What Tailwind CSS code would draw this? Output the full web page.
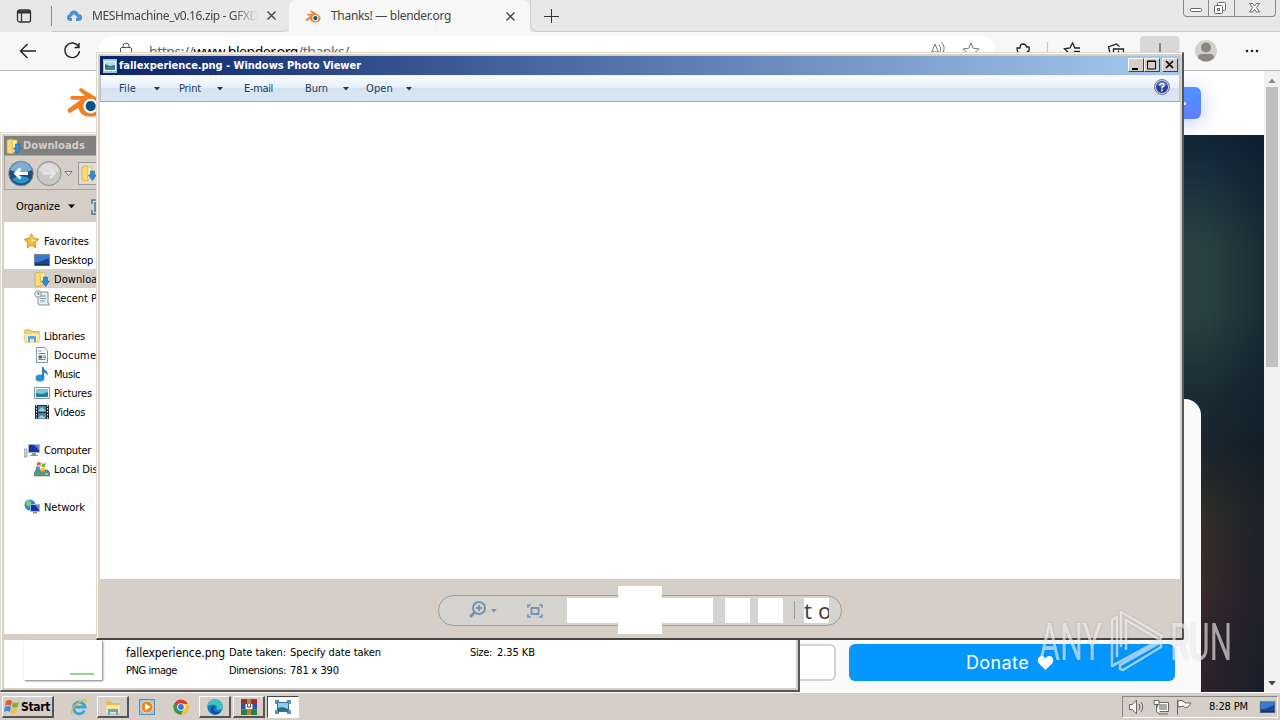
<!DOCTYPE html>
<html lang="en">
<head>
<meta charset="utf-8">
<title>Desktop</title>
<script src="https://cdn.jsdelivr.net/npm/@tailwindcss/browser@4"></script>
</head>
<body class="w-[1280px] h-[720px] overflow-hidden bg-[#d5cfc8]">
<svg class="hidden">
  <symbol id="photo" viewBox="0 0 16 16"><path d="M1 1h14v14H1z" fill="#9fc5e0"/><rect x="2" y="3" width="12" height="10" fill="#fff"/><path d="M3 4h10v8H3z" fill="#2f6f9a"/><path d="M3 4h10v3L8 8 3 6z" fill="#b4dcf0"/><path d="M3 10l5-2 5 2v2H3z" fill="#3d8a86"/></symbol>
  <symbol id="dl" viewBox="0 0 16 16"><path d="M1 2l5-1 1 2v13l-6-1z" fill="#f5dc7a" stroke="#d0a83c" stroke-width=".7"/><path d="M6 2h5v9l-4 4z" fill="#fae9a0" stroke="#d8b44a" stroke-width=".6"/><path d="M9.500 6h4v4h2l-4 5.500L7.500 10h2z" fill="#2e8bd8" stroke="#1c62a6" stroke-width=".6"/></symbol>
  <symbol id="screen" viewBox="0 0 16 14"><rect x=".5" y="1.500" width="15" height="11" fill="#1c4690" stroke="#7088a8"/><path d="M1 2h14v3L5 9 1 9z" fill="#3c78cc"/><path d="M1 11h14v1.500H1z" fill="#16335f"/></symbol>
  <symbol id="caret" viewBox="0 0 6 4"><path d="M0 0h6L3 3.500z" fill="currentColor"/></symbol>
</svg>

<main class="relative w-[1280px] h-[720px] overflow-hidden font-['DejaVu_Sans_Condensed','DejaVu_Sans',sans-serif] text-[11px] text-black whitespace-nowrap">

<!-- Browser window -->
<section class="absolute left-0 top-0 w-[1280px] h-[692px] flex flex-col bg-white">
  <div class="h-8 shrink-0 flex bg-[#e8e8e8] text-[#444] font-['Noto_Sans',sans-serif] text-[12px]">
    <div class="w-[51px] flex items-center pl-4">
      <svg class="w-4 h-4" viewBox="0 0 16 16" fill="none" stroke="#333" stroke-width="1.300"><rect x="1.500" y="2" width="13" height="12" rx="2"/><path d="M1.500 4h13" stroke-width="3"/><path d="M5.500 5v9"/></svg>
    </div>
    <div class="w-px h-5 mt-1.5 bg-[#8a8a8a]"></div>
    <div class="w-[237px] flex items-center pl-[14px] border-b border-[#ccc] rounded-br-lg">
      <svg class="w-4 h-4" viewBox="0 0 16 16"><path d="M4 13a3.600 3.600 0 0 1-.5-7A4.700 4.700 0 0 1 12.600 6 3.500 3.500 0 0 1 12.500 13H10v-3h2L8 6 4 10h2v3z" fill="#4a90d9"/></svg>
      <div class="ml-[10px] w-[166px] overflow-hidden mask-r-from-85%"><span data-w="166">MESHmachine_v0.16.zip - GFXD</span></div>
      <svg class="ml-[9px] w-[9px] h-[9px]" viewBox="0 0 9 9" stroke="#444" stroke-width="1.400"><path d="M.5.5l8 8M8.500.5l-8 8"/></svg>
    </div>
    <div class="w-[241px] flex items-center bg-[#f7f7f7] rounded-t-lg pl-4">
      <svg class="w-4 h-4" viewBox="0 0 34 30"><use href="#blender"/></svg>
      <span class="ml-[10px]" data-w="120">Thanks! — blender.org</span>
      <svg class="ml-[55px] w-[9px] h-[9px]" viewBox="0 0 9 9" stroke="#444" stroke-width="1.400"><path d="M.5.5l8 8M8.500.5l-8 8"/></svg>
    </div>
    <div class="flex-1 flex items-center pl-[13px] border-b border-l border-[#ccc] rounded-bl-lg">
      <svg class="w-[15px] h-[15px]" viewBox="0 0 15 15" stroke="#333"><path d="M7.500 1v14M0 8.500h15"/></svg>
    </div>
    <div class="w-[97px] flex border-b border-[#ccc]">
    <div class="w-[93px] h-[17px] flex border border-t-0 border-[#888] rounded-b-[4px]">
      <svg class="w-full h-full" viewBox="0 0 91 16" fill="#fff" stroke="#666"><path d="M24.500 0v16M50.500 0v16" stroke="#888"/><rect x="6.500" y="8.500" width="11" height="3" rx="1"/><rect x="33.500" y="2.500" width="8" height="8" rx="1"/><rect x="30.500" y="5.500" width="8" height="8" rx="1"/><rect x="33.500" y="8.500" width="2" height="2"/><path d="M65.500 3.500h3l2 2.500 2-2.500h3l-3 4.200 3 4.300h-3l-2-2.500-2 2.500h-3l3-4.300z"/></svg>
    </div></div>
  </div>
  <div class="h-[39px] shrink-0 flex bg-[#f7f7f7] border-b border-[#bbb]">
    <svg class="w-[99px] h-[38px]" viewBox="0 0 99 38" fill="none" stroke="#222" stroke-width="1.400"><path d="M36 19H20.500M27.500 12l-7 7 7 7"/><path d="M78.500 14.500a7.300 7.300 0 1 0 1 4.500M79 11v4.500h-4.500"/></svg>
    <div class="w-[896px] h-[30px] mt-1 rounded-[14px] bg-white flex font-['Noto_Sans',sans-serif] text-[14px] text-[#666]">
      <svg class="ml-5 mt-[6px] w-[14px] h-4" viewBox="0 0 14 16" fill="none" stroke="#555"><rect x="1.500" y="5.500" width="11" height="9" rx="1.500"/><path d="M4 5.500V4a3 3 0 0 1 6 0v1.500"/></svg>
      <span class="ml-4 mt-[5px]" data-w="200">https://<b class="font-normal text-black">www.blender.org</b>/thanks/</span>
      <svg class="ml-auto mr-3 w-[56px] h-[30px]" viewBox="0 0 56 30" fill="none" stroke="#777"><path d="M3 20L8 8l5 12M5 16h6M12 9q3 3 1 7M14 6q5 4 2 11"/><path d="M44 7l2.300 5.300 5.700.6-4.300 3.900 1.300 5.700-5-3-5 3 1.300-5.700L36 12.900l5.700-.6z"/></svg>
    </div>
    <svg class="w-[285px] h-[38px]" viewBox="995 32 285 38" fill="none" stroke="#222" stroke-width="1.300"><path d="M1018 56v-4q-1-1-1-4h3q0-4 3-4t3.500 3H1029v4q-2 0-2 3"/><path d="M1047.500 42v18" stroke="#ccc"/><path d="M1080 48h-5l-2.500-5-2.500 5-5.500.8 4 4-1 5M1074 51.500h6"/><path d="M1110 53l-1.500-6 8-3 3 2.500M1113.500 58v-9h10v9M1118.500 50.500v4"/><rect x="1140" y="36" width="39.500" height="36" rx="4" fill="#d8d8d8" stroke="none"/><path d="M1160 43v11" stroke="#555"/><circle cx="1206" cy="51" r="11" fill="#d4d0cc" stroke="none"/><g fill="#8a8683" stroke="none"><circle cx="1206" cy="47.500" r="5"/><path d="M1198 58q0-4 4-4h8q4 0 4 4-8 7-16 0"/></g><g fill="#222" stroke="none"><circle cx="1247" cy="51" r="1.300"/><circle cx="1252" cy="51" r="1.300"/><circle cx="1257" cy="51" r="1.300"/></g></svg>
  </div>
  <div class="flex-1 flex min-h-0">
    <div class="w-[1264px] flex flex-col">
      <header class="h-16 shrink-0 flex justify-between pl-[65px] pr-[63px] overflow-hidden">
        <svg class="mt-[13px] w-[40px] h-[34px]" viewBox="0 0 34 30"><g id="blender"><path d="M2 22L13 14H5q-2-2 0-3.500h12L12 6q-1-2 1.500-2.500L29 13q5 4 4 8-2 8-11 8-9 0-11-8L4 25.500q-3 0-2-3.500z" fill="#f08024"/><circle cx="22" cy="19.500" r="6.500" fill="#fff"/><circle cx="22" cy="19.500" r="4.500" fill="#0f4f8a"/></g></svg>
        <div class="mt-4 w-20 h-8 rounded-md bg-gradient-to-b from-[#4b93ff] to-[#617fff] shadow-[0_3px_20px_#7d96ff80] flex justify-end items-center pr-[15px]"><i class="w-[3px] h-[3px] rounded-full bg-white"></i></div>
      </header>
      <div class="flex-1 relative overflow-hidden bg-[linear-gradient(180deg,#10243a_0%,#2a4143_20%,#2a4143_32%,#1b2c35_46%,#1a252b_56%,#2f2d28_68%,#38292a_80%,#2c222a_100%)]">
        <div class="absolute right-0 top-0 w-20 h-full bg-[linear-gradient(90deg,#0a1a2a00_25%,#0a1a2a88_100%)]"></div>
        <div class="relative mt-[264px] w-[1201px] h-[293px] rounded-tr-2xl bg-[#fafafa] flex items-end pl-[500px] pb-[11px] pr-[26px] gap-[13px]">
          <div class="w-[336px] h-[37px] border-2 border-[#d2d2d2] rounded-md bg-white"></div>
          <div class="w-[326px] h-[37px] rounded-md bg-[#0397ff] text-white font-['Inter',sans-serif] text-[18px] flex items-center pl-[117px]">
            <span data-w="63">Donate</span>
            <svg class="ml-2 w-[17px] h-[14px]" viewBox="0 0 17 15"><path d="M8.500 15L1.500 8Q-.6 5 .6 2.500 1.800 0 4.500 0q2.500 0 4 2.400Q10 0 12.500 0q2.700 0 3.900 2.500Q17.600 5 15.500 8z" fill="#fff"/></svg>
          </div>
        </div>
      </div>
    </div>
    <div class="w-4 bg-[#f1f1f1] flex flex-col items-center justify-between pt-[7px] pb-[6px]">
      <div class="flex flex-col items-center gap-1"><svg class="w-2 h-[5px] text-[#888] rotate-180"><use href="#caret"/></svg><div class="w-[12px] h-[280px] bg-[#c1c1c1]"></div></div>
      <svg class="w-2 h-[5px] text-[#444]"><use href="#caret"/></svg>
    </div>
  </div>
</section>

<!-- Explorer window -->
<section class="absolute left-0 top-[132px] w-[800px] h-[560px] bg-[#d5cfc8] border-l border-t border-[#dcd8d0] border-r-2 border-b-2 border-r-[#555] border-b-[#555] flex flex-col pl-[3px] pr-[2px] pt-[3px] pb-[2px] shadow-[inset_1px_1px_0_#fff]">
  <div class="h-[19px] shrink-0 bg-[#808080] flex items-center gap-px pl-[2px] text-[#d5cfc8] font-bold"><svg class="w-4 h-4"><use href="#dl"/></svg><span class="mt-px" data-w="62">Downloads</span></div>
  <div class="h-[35px] shrink-0 border border-[#aaa59e] bg-[#d5cfc8] flex items-center">
    <svg class="w-[92px] h-[34px]" viewBox="5 156 92 34"><circle cx="21" cy="173.500" r="12.300" fill="#1d4d7c" stroke="#878d92"/><path d="M10 170a11.500 11.500 0 0 1 22 0q-11 5-22 0" fill="#7daed2"/><path d="M12 179q9-6 18 0-9 9-18 0" fill="#2594cf"/><path d="M28 173.500H16M20.500 168.500l-5 5 5 5" stroke="#fff" stroke-width="2.800" fill="none"/><circle cx="49" cy="173.500" r="12" fill="#c9c8c5" stroke="#8a8a88"/><path d="M38.500 171a11 11 0 0 1 21 0q-10 4-21 0" fill="#dddcda"/><path d="M43 173.500h11M50 169l4.500 4.500-4.500 4.500" stroke="#e8e8e6" stroke-width="2.200" fill="none"/><path d="M65 171.500h7l-3.500 4z" fill="#eee" stroke="#777"/><rect x="78.500" y="162.500" width="20" height="22" fill="#e0dcd4" stroke="#999"/><use href="#dl" x="81" y="165" width="16" height="16"/></svg>
  </div>
  <div class="h-8 shrink-0 flex items-center pl-3 pt-px"><span class="mt-[2px]" data-w="44">Organize</span><svg class="ml-2 w-[7px] h-[5px]" viewBox="0 0 6 4"><use href="#caret"/></svg><svg class="ml-4 w-4 h-4" viewBox="0 0 16 16" fill="none" stroke="#47799c" stroke-width="1.500"><path d="M1 5V1h4M1 11v4h4M4 4h8v8H4z"/></svg></div>
  <div class="h-[412px] shrink-0 bg-white flex flex-col pt-[9px] [&>div]:h-[19px] [&>div]:shrink-0 [&>div]:flex [&>div]:items-center [&_span]:mt-1">
    <div class="pl-[19px] gap-1"><svg class="w-[17px] h-4" viewBox="0 0 16 16"><path d="M8 .8l2.200 4.700 5 .7-3.700 3.500 1 5L8 12.300l-4.500 2.400 1-5L.8 6.200l5-.7z" fill="#fbb83a" stroke="#e08a1c"/><path d="M8 2.500l1.500 4 4 .7L8 9z" fill="#ffe58a"/></svg><span data-w="45">Favorites</span></div>
    <div class="pl-[30px] gap-1"><svg class="w-4 h-[14px]"><use href="#screen"/></svg><span data-w="39">Desktop</span></div>
    <div class="pl-[30px] gap-1 bg-[#d5cfc8]"><svg class="w-4 h-4"><use href="#dl"/></svg><span data-w="55">Downloads</span></div>
    <div class="pl-[30px] gap-1"><svg class="w-4 h-4" viewBox="0 0 16 16"><path d="M4 2h10v11q2 0 1 2H5l-1-2z" fill="#e4eef2" stroke="#7e929b"/><path d="M6 6h6M6 8.500h6M6 11h5" stroke="#6f98b0"/><circle cx="4" cy="4" r="3.300" fill="#eee" stroke="#8b9499"/><path d="M4 2v2h1.500" stroke="#555" fill="none"/></svg><span data-w="68">Recent Places</span></div>
    <div></div>
    <div class="pl-[20px] gap-1"><svg class="w-4 h-4" viewBox="0 0 16 16"><path d="M1 2h5l1 1.500h8V14H1z" fill="#f3d875" stroke="#cdaa45"/><path d="M1 6h14v8H1z" fill="#fbeaa6"/><path d="M4 8h8v6h-2v-3H6v3H4z" fill="#58a9dc"/></svg><span data-w="41">Libraries</span></div>
    <div class="pl-[30px] gap-1"><svg class="w-4 h-4" viewBox="0 0 16 16"><path d="M2.500.5h8l3 3v12h-11z" fill="#fff" stroke="#7f98a8"/><path d="M4.500 4h3M4.500 6.500h7M4.500 12.500h7M9 9h3M9 10.500h3" stroke="#5888b8"/><path d="M4.500 8.500h3.500v3H4.500z" fill="#315f9f"/></svg><span data-w="58">Documents</span></div>
    <div class="pl-[30px] gap-1"><svg class="w-4 h-4" viewBox="0 0 16 16"><ellipse cx="6" cy="12" rx="4.500" ry="3.500" fill="#2694d2"/><path d="M8 12V1h1.500q0 2.500 3 4 2 2 .5 5 0-3-3-3.500V12z" fill="#2382bd"/></svg><span data-w="26">Music</span></div>
    <div class="pl-[30px] gap-1"><svg class="w-4 h-4" viewBox="0 0 16 16"><path d="M.5 2.500h15v11H.5z" fill="#fff" stroke="#7e929f"/><path d="M2 4h12v8H2z" fill="#79c4dd"/><path d="M2 8l6 1 6-2v5H2z" fill="#247f94"/></svg><span data-w="38">Pictures</span></div>
    <div class="pl-[30px] gap-1"><svg class="w-4 h-4" viewBox="0 0 16 16"><path d="M1 1h14v14H1z" fill="#252b33"/><path d="M4 2h8v5.500H4zM4 9h8v5.500H4z" fill="#4487a8"/><path d="M5 6l3-3 4 4.500H4zM5 13l3-2 4 3.500H4z" fill="#9ccce0"/><path d="M2.500 1v14M13.500 1v14" stroke="#dde4ea" stroke-dasharray="1.500 1.500"/></svg><span data-w="31">Videos</span></div>
    <div></div>
    <div class="pl-[20px] gap-1"><svg class="w-4 h-4" viewBox="0 0 16 16"><path d="M0 7h3v8H0z" fill="#c8d0d4" stroke="#808a90" stroke-width=".6"/><path d="M4.500 2.500h11v8h-11z" fill="#1832a8" stroke="#a9b6c4"/><path d="M10 3h5v5z" fill="#6480e8"/><path d="M8 11h4v2h2v1H6v-1h2z" fill="#8a979f"/></svg><span data-w="47">Computer</span></div>
    <div class="pl-[30px] gap-1"><svg class="w-4 h-4" viewBox="0 0 16 16"><path d="M2 9h12l2 3v3H0v-3z" fill="#5f8f86" stroke="#667" stroke-width=".6"/><path d="M11 13h3" stroke="#7dff54" stroke-width="1.500"/><path d="M3 2q2-2 4 0L6.500 5q-2-1.500-4 0z" fill="#e9592e"/><path d="M8 2q2 1.500 4 0l-1 3.500q-2 1-3.500 0z" fill="#78b43c"/><path d="M2 6q2-1.500 4 0l-.5 3.500q-2-1.500-4 0z" fill="#3e8cdb"/><path d="M7.500 6.500q1.500 1 4 0L10.500 10q-2 1-4 0z" fill="#f6c12e"/></svg><span data-w="70">Local Disk (C:)</span></div>
    <div></div>
    <div class="pl-[20px] gap-1"><svg class="w-4 h-4" viewBox="0 0 16 16"><circle cx="6" cy="6" r="5.500" fill="#2b8fc6"/><path d="M3 2q3-2 4 1T4 7Q0 6 3 2" fill="#7ad07a"/><path d="M6.500 5.500h9v7h-9z" fill="#1832a8" stroke="#a9b6c4"/><path d="M11 6h4v5z" fill="#6480e8"/><path d="M9 13h4v1.500H9z" fill="#8a979f"/></svg><span data-w="41">Network</span></div>
  </div>
  <div class="h-[6px] shrink-0"></div>
  <div class="flex-1 bg-white flex text-[11px] leading-[18px]">
    <div class="ml-5 w-[78px] h-[40px] bg-white shadow-[1px_1px_2px_#777] flex items-end justify-end pr-2 pb-[5px]"><i class="w-6 h-[2px] bg-[#8fd68f]"></i></div>
    <div class="ml-[24px] w-[103px] pt-1 flex flex-col"><span class="text-[12px]" data-w="99">fallexperience.png</span><span data-w="51">PNG image</span></div>
    <div class="w-[241px] pt-1 flex flex-col"><div class="flex gap-1"><span data-w="57">Date taken:</span><span data-w="91">Specify date taken</span></div><div class="flex gap-[4px]"><span data-w="57">Dimensions:</span><span data-w="49">781 x 390</span></div></div>
    <div class="pt-1 flex gap-[5px]"><span data-w="22">Size:</span><span data-w="38">2.35 KB</span></div>
  </div>
</section>

<!-- Photo viewer window -->
<section class="absolute left-24 top-[52px] w-[1088px] h-[588px] bg-[#d5cfc8] border-l border-t border-[#e2d5c5] border-r-2 border-b-2 border-r-[#555] border-b-[#444] shadow-[inset_1px_1px_0_#fff] flex flex-col pl-[3px] pt-[3px] pr-[2px]">
  <div class="h-[19px] shrink-0 bg-[linear-gradient(90deg,#0a246a,#a6caf0)] flex items-center pl-[2px] pr-[2px] text-white font-bold">
    <svg class="w-4 h-4"><use href="#photo"/></svg><span class="ml-[1px] mt-[2px]" data-w="242">fallexperience.png - Windows Photo Viewer</span>
    <div class="ml-auto mb-[2px] flex [&>svg]:w-4 [&>svg]:h-[14px] [&>svg]:bg-[#d5cfc8] [&>svg]:border [&>svg]:border-white [&>svg]:border-r-[#444] [&>svg]:border-b-[#444]">
      <svg viewBox="0 0 14 12"><path d="M3 9h6v2H3z"/></svg>
      <svg viewBox="0 0 14 12"><path d="M2.500 2h8v8h-8zM2.500 2.500h8" fill="none" stroke="#000"/></svg>
      <svg class="ml-[2px]" viewBox="0 0 14 12"><path d="M3 2l7 7M10 2L3 9" stroke="#000" stroke-width="1.700"/></svg>
    </div>
  </div>
  <div class="h-[27px] shrink-0 border border-t-[#eef3fa] border-l-[#b4c4d4] border-r-[#b4c4d4] border-b-[#9cabb8] bg-[linear-gradient(180deg,#fafcff,#e6f0fa_45%,#d4e3f0_50%,#dce9f4)] flex items-center pl-[18px] text-[#1e395b] [&>span]:mt-[2px]">
    <span data-w="17">File</span><svg class="ml-[18px] w-[6px] h-1"><use href="#caret"/></svg>
    <span class="ml-[19px]" data-w="22">Print</span><svg class="ml-[16px] w-[6px] h-1"><use href="#caret"/></svg>
    <span class="ml-[21px]" data-w="29">E-mail</span>
    <span class="ml-[32px]" data-w="23">Burn</span><svg class="ml-[15px] w-[6px] h-1"><use href="#caret"/></svg>
    <span class="ml-[17px]" data-w="27">Open</span><svg class="ml-[13px] w-[6px] h-1"><use href="#caret"/></svg>
    <svg class="ml-auto mr-[9px] mb-[3px] w-4 h-4" viewBox="0 0 16 16"><circle cx="8" cy="8" r="7.500" fill="#c9d1ea" stroke="#70778f"/><circle cx="8" cy="8" r="6" fill="#2440a0"/><path d="M3 6a5.500 5.500 0 0 1 10 0q-5 3-10 0" fill="#5a78cc"/><path d="M6 6.500Q6 4.500 8 4.500t2 1.800Q10 7.500 8 8.300V9.500M8 10.500v1.700" stroke="#fff" stroke-width="1.600" fill="none"/></svg>
  </div>
  <div class="h-[477px] shrink-0 bg-white"></div>
  <div class="flex-1 flex justify-center items-center pt-[3px]">
    <div class="w-[404px] h-[31px] rounded-full border border-[#9aa0a5] bg-[#d4d3cf] flex items-center">
      <svg class="ml-[28px] w-[34px] h-5" viewBox="0 0 34 20" fill="none" stroke="#7892ae"><circle cx="12" cy="8" r="6" stroke-width="2"/><path d="M8 12l-5 5" stroke-width="3"/><path d="M12 5v6M9 8h6" stroke-width="1.800"/><path d="M24 9h6l-3 3.500z" fill="#7892ae" stroke="none"/></svg>
      <svg class="ml-[26px] w-4 h-4 mt-px" viewBox="0 0 16 16" fill="none" stroke="#7892ae"><path d="M4.500 5h7v6h-7z" stroke-width="1.800"/><path d="M1 5V2h3M12 2h3v3M15 11v3h-3M4 14H1v-3" stroke-width="1.500"/></svg>
      <div class="ml-[24px] w-[51px] h-[25px] bg-white"></div><div class="w-11 h-12 shrink-0 bg-white -my-3"></div><div class="w-[51px] h-[25px] bg-white"></div>
      <div class="ml-3 w-[25px] h-[25px] bg-white"></div><div class="ml-2 w-[25px] h-[25px] bg-white"></div>
      <div class="ml-[11px] w-px h-[18px] bg-[#999]"></div>
      <div class="ml-[9px] w-[25px] h-[25px] bg-white overflow-hidden text-[#444] text-[22px] leading-[24px] font-['Noto_Sans',sans-serif] flex gap-[6px]"><span>t</span><span>o</span></div>
    </div>
  </div>
</section>

<!-- Taskbar -->
<footer class="absolute left-0 top-[692px] w-[1280px] h-7 bg-[#d5cfc8] border-t border-white flex items-start pt-[3px] pl-[2px] pr-[2px]">
  <div class="w-[52px] h-[22px] border border-white border-r-2 border-b-2 border-r-[#555] border-b-[#555] flex items-center gap-[1px] pl-[1px] font-bold text-[12px]">
    <svg class="w-4 h-4" viewBox="0 0 16 16"><path d="M2 2q3-2 6 0L7 7Q4 5 1 7z" fill="#e9592e"/><path d="M9 3q3 2 6 0l-1.500 5q-3 1.500-5.500 0z" fill="#78b43c"/><path d="M1 8q3-2 6 0l-1 5q-3-2-6 0z" fill="#3e8cdb"/><path d="M8 9q2 1.500 5.500 0L12 14q-3 1.500-5.500 0z" fill="#f6c12e"/></svg><span data-w="29">Start</span>
  </div>
  <div class="flex ml-[9px] [&>div]:h-[22px] [&>div]:w-8 [&>div]:mr-[2px] [&>div]:flex [&>div]:items-center [&>div]:justify-center">
    <div><svg class="w-[18px] h-[18px]" viewBox="0 0 18 18" fill="none"><path d="M14.500 12.500A5.800 5.800 0 1 1 15 9H5" stroke="#36a5db" stroke-width="2.800"/><path d="M2 16Q0 11 8 5q9-6 8-1" stroke="#e8bb37" stroke-width="1.400"/></svg></div>
    <div class="border border-white border-r-2 border-b-2 border-r-[#555] border-b-[#555]"><svg class="w-[18px] h-[18px]" viewBox="0 0 18 18"><path d="M2 3h5l1 2h8v9H2z" fill="#e4be58"/><path d="M2 7h14v8H2z" fill="#fae69a"/><path d="M4 11h10v6h-2v-3H6v3H4z" fill="#56acdf"/></svg></div>
    <div><svg class="w-4 h-4" viewBox="0 0 16 16"><rect x=".5" y=".5" width="15" height="15" fill="#9cc6e4" stroke="#5a90b8"/><circle cx="8" cy="8" r="6" fill="#f08820" stroke="#fff" stroke-width=".6"/><path d="M6 4.500l5.500 3.500L6 11.500z" fill="#fff"/></svg></div>
    <div><svg class="w-4 h-4" viewBox="0 0 16 16"><circle cx="8" cy="8" r="7.500" fill="#e33b2e"/><path d="M1.500 4.200A7.500 7.500 0 0 0 8 15.500L11.500 9H5z" fill="#2c9e4b"/><path d="M8 15.500A7.500 7.500 0 0 0 14.800 5H8l3.500 4z" fill="#fccc2e"/><circle cx="8" cy="8" r="3.800" fill="#fff"/><circle cx="8" cy="8" r="2.900" fill="#3277e0"/></svg></div>
    <div class="border border-white border-r-2 border-b-2 border-r-[#555] border-b-[#555]"><svg class="w-4 h-4" viewBox="0 0 16 16"><circle cx="8" cy="8" r="7.700" fill="#1677c8"/><path d="M.5 7Q2 .3 8 .3q7.500 0 7.700 7 0 3.500-4 3.500-3 0-2-2 .5-3-3-3-4 0-6.200 1.200" fill="#3cc4c0"/><path d="M8 7q-3 3 0 5.500 2.500 1.500 6 0-3 3.500-7 3Q2 12 5 8q1.500-1.500 3-1" fill="#0d4c98"/></svg></div>
    <div class="border border-white border-r-2 border-b-2 border-r-[#555] border-b-[#555]"><svg class="w-4 h-4" viewBox="0 0 16 16"><path d="M0 0h16v5H0z" fill="#a42e34"/><path d="M0 5h16v5.500H0z" fill="#33509f"/><path d="M0 10.500h16V16H0z" fill="#2d8040"/><path d="M6 0h4v16H6z" fill="#b98439"/><path d="M4.500 5h7v5h-7z" fill="#eee"/><path d="M6.500 5v3h3V5" stroke="#555" fill="none"/></svg></div>
    <div class="border border-[#444] border-r-white border-b-white bg-white"><svg class="w-4 h-4" viewBox="0 0 16 16"><path d="M2.500 3.500h11v9h-11z" fill="#8dccea" stroke="#39729b"/><path d="M3 9l4-1 6 2v2H3z" fill="#286b8f"/><path d="M1 5V2h3M12 2h3v3M15 11v3h-3M4 14H1v-3" stroke="#4e8eb4" stroke-width="1.800" fill="none"/></svg></div>
  </div>
  <div class="ml-auto w-[156px] h-[22px] border border-[#888] border-r-white border-b-white flex items-center pl-[5px]">
    <svg class="w-[70px] h-[18px]" viewBox="0 0 70 18" fill="#fff" stroke="#666"><path d="M1.500 6.500h3l4-4.500v14l-4-4.500h-3z"/><path d="M11 6q2 3 0 6M13 4q3.500 5 0 10" fill="none"/><path d="M29.500 4.500h11v9h-11z"/><path d="M31 6h8v6h-8z" fill="#aaa" stroke="none"/><path d="M31 16h9M26 2.500h5v4h-5zM28.500 7v6q0 2.500 4 2.500" /><path d="M49.500 1.500v15M50 3q3-1.500 6 .5l1 1.500h6l-3 4q-3 2-5-1l-5 1z"/></svg>
    <span class="ml-[11px] mt-px" data-w="39">8:28 PM</span>
    <svg class="ml-[11px] w-[17px] h-[14px]" viewBox="0 0 16 14"><use href="#screen"/></svg>
  </div>
</footer>

<!-- Watermark -->
<svg class="absolute left-[1030px] top-[600px] w-[210px] h-[80px] drop-shadow-[0_0_1px_#0004]" viewBox="1030 600 210 80" fill="#fff" fill-opacity=".6" font-family="Roboto" font-size="52">
  <text x="1039" y="660" textLength="63" lengthAdjust="spacingAndGlyphs">ANY</text>
  <text x="1170" y="660" textLength="62" lengthAdjust="spacingAndGlyphs">RUN</text>
  <g fill="none" stroke="#fff" stroke-opacity=".6" stroke-width="2.600" stroke-linejoin="round" stroke-linecap="round"><path d="M1121 646v-34l41 24-2 4-34-20v29"/><path d="M1117 617l-5 3v46l46-25M1117 618v38"/><path d="M1120 665l41-23v5l-38 23-3-1z"/></g>
</svg>
</main>
<script>
// Spread each label's letters so that it fills its nominal width.
function fitLabels() {
  document.querySelectorAll('[data-w]').forEach(function (el) {
    el.style.letterSpacing = '0px';
    el.style.display = 'inline-block';
    el.style.flexShrink = 0;
    if (getComputedStyle(el.parentElement).flexDirection === 'column') el.style.alignSelf = 'flex-start';
    var w = el.getBoundingClientRect().width;
    el.style.letterSpacing = ((el.dataset.w - w) / el.textContent.length) + 'px';
  });
}
fitLabels();
new ResizeObserver(fitLabels).observe(document.querySelector('main'));
window.addEventListener('load', function () {
  fitLabels();
  document.fonts.ready.then(fitLabels);
  requestAnimationFrame(fitLabels);
  setTimeout(fitLabels, 50);
});
</script>
</body>
</html>
